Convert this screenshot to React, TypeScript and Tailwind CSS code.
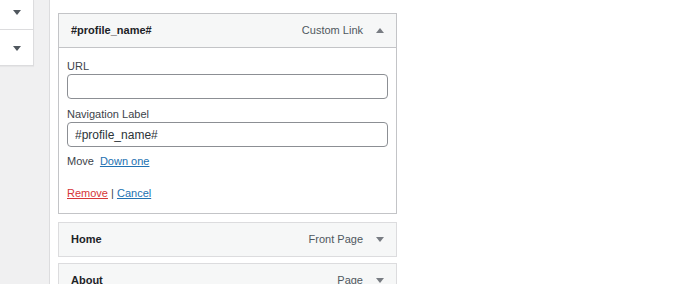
import type { ReactNode } from 'react';

function Caret({ up = false, className = '' }: { up?: boolean; className?: string }) {
  return (
    <svg width="8" height="5" viewBox="0 0 8 5" className={className} aria-hidden>
      {up ? <path d="M4 0 L8 5 L0 5 Z" fill="currentColor" /> : <path d="M0 0 L8 0 L4 5 Z" fill="currentColor" />}
    </svg>
  );
}

function ItemHandle({ title, type, open = false }: { title: string; type: string; open?: boolean }) {
  return (
    <div
      className={`flex h-[35px] items-center justify-between border bg-[#f6f7f7] pl-3 pr-[12px] ${
        open ? 'border-[#c3c4c7]' : 'border-[#dcdcde]'
      }`}
    >
      <span className="text-[11px] font-bold text-[#1d2327]">{title}</span>
      <span className="flex items-center gap-[13px] text-[11px] text-[#50575e]">
        {type}
        <Caret up={open} className="text-[#787c82]" />
      </span>
    </div>
  );
}

function Field({ label, value = '' }: { label: string; value?: string }): ReactNode {
  return (
    <div className="flex flex-col">
      <label className="text-[11px] leading-[14px] text-[#3c434a]">{label}</label>
      <input
        readOnly
        value={value}
        className="mt-[1px] h-[25px] rounded-[4px] border border-[#8c8f94] bg-white px-[7px] text-[12px] text-[#2c3338] outline-none"
      />
    </div>
  );
}

export default function App() {
  return (
    <div
      className="flex h-[284px] w-[680px] overflow-hidden bg-[#f0f0f1]"
      style={{ fontFamily: '"Liberation Sans", Arial, sans-serif' }}
    >
      {/* left accordion stub */}
      <div className="w-[34px] shrink-0">
        <div className="border-b border-r border-[#dcdcde] bg-white shadow-[0_1px_1px_rgba(0,0,0,0.04)]">
          <div className="flex h-[30px] items-center justify-center border-b border-[#dcdcde]">
            <Caret className="-mt-[5px] text-[#50575e]" />
          </div>
          <div className="flex h-[35px] items-center justify-center">
            <Caret className="mt-[1px] text-[#50575e]" />
          </div>
        </div>
      </div>

      {/* menu structure */}
      <div className="ml-[15px] flex-1 border-l border-[#dcdcde] bg-white pl-[8px] pt-[13px]">
        <div className="w-[339px]">
          <ItemHandle title="#profile_name#" type="Custom Link" open />
          <div className="border border-t-0 border-[#c3c4c7] bg-white px-2 pb-[13px] pt-[11px]">
            <Field label="URL" />
            <div className="mt-[8px]">
              <Field label="Navigation Label" value="#profile_name#" />
            </div>
            <div className="mt-[7px] flex items-center gap-[6px] text-[11px] leading-[14px] text-[#3c434a]">
              <span>Move</span>
              <a className="text-[#2271b1] underline">Down one</a>
            </div>
            <div className="mt-[18px] text-[11px] leading-[14px] text-[#3c434a]">
              <a className="text-[#d63638] underline">Remove</a>
              <span> | </span>
              <a className="text-[#2271b1] underline">Cancel</a>
            </div>
          </div>

          <div className="mt-[8px]">
            <ItemHandle title="Home" type="Front Page" />
          </div>
          <div className="mt-[6px]">
            <ItemHandle title="About" type="Page" />
          </div>
        </div>
      </div>
    </div>
  );
}
